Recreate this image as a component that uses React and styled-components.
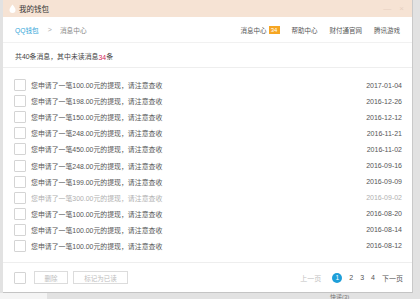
import React from "react";
import styled, { createGlobalStyle } from "styled-components";

const Global = createGlobalStyle`
  html, body { margin: 0; padding: 0; }
  body {
    width: 420px; height: 299px; overflow: hidden;
    background: #dedede;
    font-family: "Liberation Sans", "Noto Sans CJK SC", sans-serif;
    color: #555;
  }
`;

const Screen = styled.div`
  width: 420px; height: 299px; display: flex; flex-direction: column;
  background: #e2e2e2;
`;

const Window = styled.div`
  margin-left: 3px; width: 410px; height: 293px; box-sizing: border-box;
  background: #fff; border-right: 1px solid #c9c9c9; border-bottom: 1px solid #c4c4c4;
  display: flex; flex-direction: column;
`;

const TitleBar = styled.div`
  height: 17px; flex: none; background: #f6e3d4; display: flex; align-items: center;
  padding-left: 6px; gap: 3px; font-size: 7.5px; color: #333;
`;

const Controls = styled.div`
  margin-left: auto; display: flex; gap: 8px; padding-right: 8px; color: #e6cfbf; font-size: 8px;
`;

const Header = styled.div`
  height: 26px; flex: none; display: flex; align-items: center; padding: 0 12px;
  font-size: 6.7px; border-bottom: 1px solid #f1f1f1; box-sizing: border-box;
`;

const Crumb = styled.span`
  color: ${p => (p.$link ? "#35a7d9" : "#888")};
`;

const Sep = styled.span`
  color: #aaa; margin: 0 8px 0 9px; font-size: 7px;
`;

const Nav = styled.div`
  margin-left: auto; display: flex; align-items: center; gap: 12px; color: #555;
  font-size: 6.5px;
`;

const NavItem = styled.span`
  display: flex; align-items: center; gap: 2px;
`;

const Badge = styled.span`
  background: #f6a623; color: #fff; font-size: 6px; height: 8px; min-width: 9px;
  display: inline-flex; align-items: center; justify-content: center; padding: 0 1px;
`;

const Summary = styled.div`
  height: 25px; flex: none; display: flex; align-items: flex-end; padding: 0 12px 6px;
  box-sizing: border-box; border-bottom: 1px solid #eee; font-size: 6.9px; color: #444;
`;

const Red = styled.span` color: #d0245a; `;

const List = styled.div`
  padding-top: 9px; flex: 1; display: flex; flex-direction: column;
`;

const Row = styled.div`
  height: 16.1px; display: flex; align-items: center; padding: 0 10px 0 11px;
  font-size: 6.9px; color: ${p => (p.$read ? "#b0b0b0" : "#555")};
`;

const Box = styled.span`
  width: 10px; height: 10px; border: 1px solid #d4d4d4; border-radius: 1px; flex: none;
  margin-right: 5px; background: #fff;
`;

const Date = styled.span` margin-left: auto; font-size: 7px; `;

const Footer = styled.div`
  height: 29px; flex: none; border-top: 1px solid #eee; display: flex; align-items: center;
  padding: 0 9px 0 11px; font-size: 7px;
`;

const Btn = styled.span`
  height: 13px; width: ${p => p.$w}px; border: 1px solid #dcdcdc; box-sizing: border-box;
  display: inline-flex; align-items: center; justify-content: center; color: #bdbdbd;
  font-size: 6.5px; margin-left: ${p => p.$ml}px;
`;

const Pager = styled.div`
  margin-left: auto; display: flex; align-items: center; gap: 7px; color: #555;
`;

const PageLink = styled.span` color: ${p => (p.$off ? "#c2c2c2" : "#555")}; `;

const Current = styled.span`
  width: 10px; height: 10px; border-radius: 50%; background: #1e9fd9; color: #fff;
  display: inline-flex; align-items: center; justify-content: center; font-size: 6.5px;
  margin-left: 4px;
`;

const Bottom = styled.div`
  height: 6px; display: flex; font-size: 6px; color: #777; overflow: hidden;
`;

const BottomLeft = styled.div` width: 47px; background: #f4f4f4; `;
const BottomText = styled.div` margin-left: 283px; line-height: 8px; `;

const rows = [
  ["100.00", "2017-01-04"], ["198.00", "2016-12-26"], ["150.00", "2016-12-12"],
  ["248.00", "2016-11-21"], ["450.00", "2016-11-02"], ["248.00", "2016-09-16"],
  ["199.00", "2016-09-09"], ["300.00", "2016-09-02", true], ["100.00", "2016-08-20"],
  ["100.00", "2016-08-14"], ["100.00", "2016-08-12"],
];

const Drop = () => (
  <svg width="7" height="9" viewBox="0 0 7 9">
    <path d="M3.5 0.5 C5.5 3 6.5 4.5 6.5 6 A3 3 0 0 1 0.5 6 C0.5 4.5 1.5 3 3.5 0.5Z" fill="#fff" />
  </svg>
);

export default function App() {
  return (
    <Screen>
      <Global />
      <Window>
        <TitleBar>
          <Drop />
          <span>我的钱包</span>
          <Controls><span>—</span><span>×</span></Controls>
        </TitleBar>
        <Header>
          <Crumb $link>QQ钱包</Crumb>
          <Sep>&gt;</Sep>
          <Crumb>消息中心</Crumb>
          <Nav>
            <NavItem>消息中心<Badge>34</Badge></NavItem>
            <NavItem>帮助中心</NavItem>
            <NavItem>财付通官网</NavItem>
            <NavItem>腾讯游戏</NavItem>
          </Nav>
        </Header>
        <Summary>共40条消息，其中未读消息<Red>34</Red>条</Summary>
        <List>
          {rows.map(([amt, d, read], i) => (
            <Row key={i} $read={read}>
              <Box />
              <span>您申请了一笔{amt}元的提现，请注意查收</span>
              <Date>{d}</Date>
            </Row>
          ))}
        </List>
        <Footer>
          <Box />
          <Btn $w={34} $ml={3}>删除</Btn>
          <Btn $w={55} $ml={5}>标记为已读</Btn>
          <Pager>
            <PageLink $off>上一页</PageLink>
            <Current>1</Current>
            <PageLink>2</PageLink>
            <PageLink>3</PageLink>
            <PageLink>4</PageLink>
            <PageLink>下一页</PageLink>
          </Pager>
        </Footer>
      </Window>
      <Bottom>
        <BottomLeft />
        <BottomText>快递(3)</BottomText>
      </Bottom>
    </Screen>
  );
}
